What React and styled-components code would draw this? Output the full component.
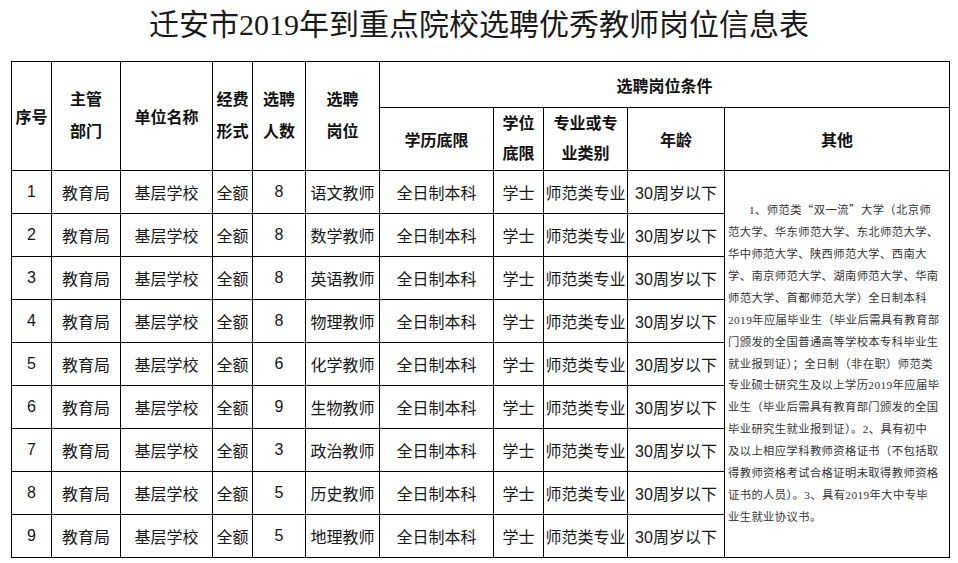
import React from "react";
import styled, { createGlobalStyle } from "styled-components";

const GlobalStyle = createGlobalStyle`
  html, body {
    margin: 0;
    padding: 0;
    background: #fff;
  }
`;

const subjects = [
  ["语文教师", 8],
  ["数学教师", 8],
  ["英语教师", 8],
  ["物理教师", 8],
  ["化学教师", 6],
  ["生物教师", 9],
  ["政治教师", 3],
  ["历史教师", 5],
  ["地理教师", 5],
];

const otherLines = [
  "1、师范类“双一流”大学（北京师",
  "范大学、华东师范大学、东北师范大学、",
  "华中师范大学、陕西师范大学、西南大",
  "学、南京师范大学、湖南师范大学、华南",
  "师范大学、首都师范大学）全日制本科",
  "2019年应届毕业生（毕业后需具有教育部",
  "门颁发的全国普通高等学校本专科毕业生",
  "就业报到证）；全日制（非在职）师范类",
  "专业硕士研究生及以上学历2019年应届毕",
  "业生（毕业后需具有教育部门颁发的全国",
  "毕业研究生就业报到证）。2、具有初中",
  "及以上相应学科教师资格证书（不包括取",
  "得教师资格考试合格证明未取得教师资格",
  "证书的人员）。3、具有2019年大中专毕",
  "业生就业协议书。",
];

const widths = [40, 69, 92, 40, 53, 74, 114, 50, 84, 97, 225];

// quotes get a full-width box so the first line keeps its length
function withQuotes(line) {
  return line
    .split(/([“”])/)
    .map((part, k) =>
      part === "“" || part === "”" ? <Quote key={k}>{part}</Quote> : part
    );
}

export default function App() {
  return (
    <Page>
      <GlobalStyle />
      <Title>迁安市2019年到重点院校选聘优秀教师岗位信息表</Title>
      <Table>
        <colgroup>
          {widths.map((w, i) => (
            <col key={i} style={{ width: w }} />
          ))}
        </colgroup>
        <thead>
          <HeadRow $height={46}>
            <Th rowSpan={2}>序号</Th>
            <Th rowSpan={2}>
              <Stack>
                <span>主管</span>
                <span>部门</span>
              </Stack>
            </Th>
            <Th rowSpan={2}>单位名称</Th>
            <Th rowSpan={2}>
              <Stack>
                <span>经费</span>
                <span>形式</span>
              </Stack>
            </Th>
            <Th rowSpan={2}>
              <Stack>
                <span>选聘</span>
                <span>人数</span>
              </Stack>
            </Th>
            <Th rowSpan={2}>
              <Stack>
                <span>选聘</span>
                <span>岗位</span>
              </Stack>
            </Th>
            <Th colSpan={5}>选聘岗位条件</Th>
          </HeadRow>
          <HeadRow $height={63}>
            <Th>学历底限</Th>
            <Th>
              <Stack $gap={30}>
                <span>学位</span>
                <span>底限</span>
              </Stack>
            </Th>
            <Th>
              <Stack $gap={30}>
                <span>专业或专</span>
                <span>业类别</span>
              </Stack>
            </Th>
            <Th>年龄</Th>
            <Th>其他</Th>
          </HeadRow>
        </thead>
        <tbody>
          {subjects.map(([post, count], i) => (
            <BodyRow key={post}>
              <Td>{i + 1}</Td>
              <Td>教育局</Td>
              <Td>基层学校</Td>
              <Td>全额</Td>
              <Td>{count}</Td>
              <Td>{post}</Td>
              <Td>全日制本科</Td>
              <Td>学士</Td>
              <Td>师范类专业</Td>
              <Td>30周岁以下</Td>
              {i === 0 && (
                <OtherCell rowSpan={subjects.length}>
                  {otherLines.map((line, j) => (
                    <OtherLine key={j} $indent={j === 0}>
                      {withQuotes(line)}
                    </OtherLine>
                  ))}
                </OtherCell>
              )}
            </BodyRow>
          ))}
        </tbody>
      </Table>
    </Page>
  );
}

const Page = styled.div`
  width: 958px;
  height: 563px;
  overflow: hidden;
  background: #fff;
`;

const Title = styled.h1`
  margin: 0;
  height: 61px;
  line-height: 50px;
  text-align: center;
  font-family: "Liberation Serif", "Noto Sans CJK SC", serif;
  font-size: 30px;
  font-weight: 400;
  color: #1a1a1a;
`;

const Table = styled.table`
  margin-left: 11px;
  width: 938px;
  table-layout: fixed;
  border-collapse: collapse;
  font-family: "Liberation Sans", "Noto Sans CJK SC", sans-serif;
  color: #111;
`;

const HeadRow = styled.tr`
  height: ${(p) => p.$height}px;
`;

const BodyRow = styled.tr`
  height: 43px;
`;

const Th = styled.th`
  border: 1px solid #000;
  padding: 0;
  font-size: 16px;
  font-weight: 700;
  text-align: center;
  vertical-align: middle;
  white-space: nowrap;
`;

const Stack = styled.div`
  display: flex;
  flex-direction: column;
  align-items: center;
  line-height: ${(p) => p.$gap || 32}px;
`;

const Td = styled.td`
  border: 1px solid #000;
  padding: 0;
  font-size: 16px;
  font-weight: 400;
  text-align: center;
  vertical-align: middle;
  white-space: nowrap;
  color: #161616;
`;

const OtherCell = styled.td`
  border: 1px solid #000;
  padding: 0 0 0 3px;
  vertical-align: middle;
  font-family: "Liberation Serif", "Noto Sans CJK SC", serif;
  font-size: 11.3px;
  letter-spacing: 0.4px;
  color: #333;
`;

const OtherLine = styled.div`
  line-height: 21.9px;
  white-space: nowrap;
  padding-left: ${(p) => (p.$indent ? 21 : 0)}px;
`;

const Quote = styled.span`
  font-family: "Noto Sans CJK SC", sans-serif;
  display: inline-block;
  width: 12px;
  text-align: center;
`;
